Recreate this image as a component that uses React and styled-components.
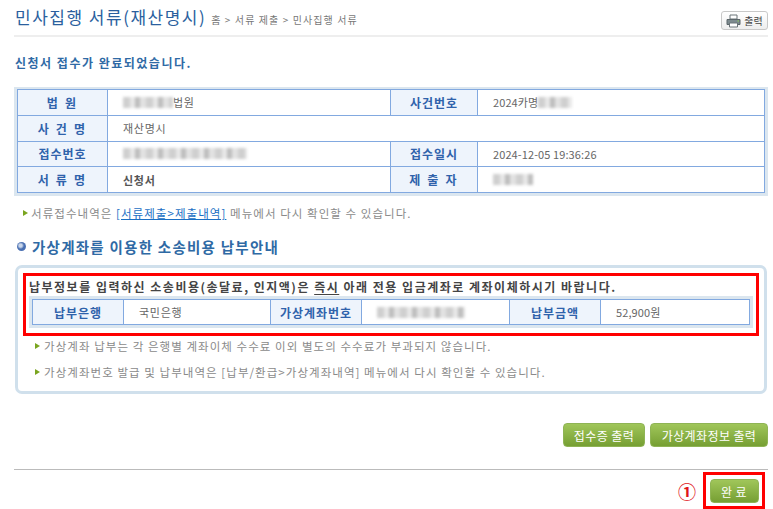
import React from "react"
import styled, { createGlobalStyle } from "styled-components"

const FONT = `"Noto Sans CJK KR", "Noto Sans", sans-serif`;

const caseRows = [
    [["법 원", { blur: 50, trail: "법원" }], ["사건번호", { text: "2024카명", blur: 34, tight: true }]],
    [["사 건 명", { text: "재산명시" }]],
    [["접수번호", { blur: 124 }], ["접수일시", { text: "2024-12-05 19:36:26", tight: true }]],
    [["서 류 명", { text: "신청서", bold: true }], ["제 출 자", { blur: 40 }]],
];

const Cell = ({ text, blur, trail, bold, tight }) =>
    <Value $bold={bold} $tight={tight}>
        {text}
        {blur && <Blur $w={blur}/>}
        {trail}
    </Value>;

const PrinterIcon = () =>
    <svg width="15" height="14" viewBox="0 0 15 14">
        <path d="M4 1h7v4H4z" fill="#fff" stroke="#6b7478"/>
        <path d="M1 5.5h13v5H1z" fill="#7d8a8e" stroke="#5c666a"/>
        <path d="M3.5 9h8v4h-8z" fill="#fff" stroke="#6b7478"/>
        <path d="M11.5 6.5h1.5v1h-1.5z" fill="#8fd05a"/>
    </svg>;

const App = () =>
    <Page>
        <GlobalStyle/>
        <Header>
            <Title>민사집행 서류(재산명시)</Title>
            <Crumbs>홈 &gt; 서류 제출 &gt; 민사집행 서류</Crumbs>
            <PrintButton><PrinterIcon/>출력</PrintButton>
        </Header>
        <Notice>신청서 접수가 완료되었습니다.</Notice>
        <TableFrame>
            <CaseTable>
                {caseRows.map((row) => row.map(([label, value], index) =>
                    <React.Fragment key={label}>
                        <Label $spaced={label.includes(" ")}>{label}</Label>
                        <CellWrap $wide={row.length === 1} $divider={row.length === 2 && index === 0}><Cell {...value}/></CellWrap>
                    </React.Fragment>
                ))}
            </CaseTable>
        </TableFrame>
        <Hint $top={9}>서류접수내역은 <HintLink>[서류제출&gt;제출내역]</HintLink> 메뉴에서 다시 확인할 수 있습니다.</Hint>
        <Section><Bullet/>가상계좌를 이용한 소송비용 납부안내</Section>
        <Panel>
            <Highlight>
                <Lead>납부정보를 입력하신 소송비용(송달료, 인지액)은 <u>즉시</u> 아래 전용 입금계좌로 계좌이체하시기 바랍니다.</Lead>
                <PayFrame>
                    <PayTable>
                        <PayLabel>납부은행</PayLabel>
                        <PayValue>국민은행</PayValue>
                        <PayLabel>가상계좌번호</PayLabel>
                        <PayValue><Blur $w={88}/></PayValue>
                        <PayLabel>납부금액</PayLabel>
                        <PayValue $tight>52,900원</PayValue>
                    </PayTable>
                </PayFrame>
            </Highlight>
            <PanelHint $top={1}>가상계좌 납부는 각 은행별 계좌이체 수수료 이외 별도의 수수료가 부과되지 않습니다.</PanelHint>
            <PanelHint $top={8}>가상계좌번호 발급 및 납부내역은 [납부/환급&gt;가상계좌내역] 메뉴에서 다시 확인할 수 있습니다.</PanelHint>
        </Panel>
        <Actions>
            <GreenButton $w={82}>접수증 출력</GreenButton>
            <GreenButton $w={118}>가상계좌정보 출력</GreenButton>
        </Actions>
        <Footer>
            <Marker>①</Marker>
            <FooterBox><GreenButton $w={49}>완 료</GreenButton></FooterBox>
        </Footer>
    </Page>;

const GlobalStyle = createGlobalStyle`
    html, body {
        margin: 0;
        background: #fff;
        overflow: hidden;
    }
    body {
        font-family: ${FONT};
    }
`;
const Page = styled.div`
    width: 754px;
    height: 509px;
    padding-left: 14px;
    overflow: hidden;
`;
const Header = styled.div`
    height: 35px;
    display: flex;
    align-items: center;
    border-bottom: 2px solid #eeeeee;
    padding-left: 1px;
`;
const Title = styled.h1`
    margin: 0 0 2px;
    font-size: 17px;
    font-weight: 400;
    color: #2b5f9e;
    letter-spacing: 1.5px;
    white-space: nowrap;
`;
const Crumbs = styled.span`
    margin: 3px 0 0 5px;
    font-size: 10px;
    color: #777;
    letter-spacing: 1.1px;
    white-space: nowrap;
`;
const PrintButton = styled.div`
    margin-left: auto;
    margin-top: 6px;
    width: 47px;
    height: 19px;
    box-sizing: border-box;
    display: flex;
    align-items: center;
    justify-content: center;
    gap: 3px;
    font-size: 10px;
    color: #444;
    background: linear-gradient(#ffffff, #eeeeee);
    border: 1px solid #c8c8c8;
    border-radius: 3px;
`;
const Notice = styled.p`
    margin: 16px 0 0 1px;
    height: 20px;
    line-height: 20px;
    font-size: 12px;
    font-weight: 700;
    color: #2f6aa5;
    letter-spacing: 1.5px;
`;
const TableFrame = styled.div`
    margin-top: 14px;
    padding: 2px 3px 3px;
    background: #dbe6ef;
`;
const CaseTable = styled.div`
    display: grid;
    grid-template-columns: 90px 283px 87px 1fr;
    grid-auto-rows: 25.75px;
    background: #fff;
    border: 1px solid #82a9e0;
    border-bottom: 0;
`;
const Label = styled.div`
    display: flex;
    align-items: center;
    justify-content: center;
    font-size: 12px;
    font-weight: 700;
    letter-spacing: ${(props) => props.$spaced ? "2.2px" : "1px"};
    color: #2f62ab;
    background: #eef4fc;
    border-right: 1px solid #82a9e0;
    border-bottom: 1px solid #82a9e0;
    white-space: pre;
`;
const CellWrap = styled.div`
    display: flex;
    align-items: center;
    padding-left: 15px;
    border-bottom: 1px solid #82a9e0;
    ${(props) => props.$wide && "grid-column: 2 / -1;"}
    ${(props) => props.$divider && "border-right: 1px solid #82a9e0;"}
`;
const Value = styled.div`
    display: flex;
    align-items: center;
    font-size: 11px;
    letter-spacing: ${(props) => props.$tight ? "0.1px" : "0.7px"};
    font-weight: ${(props) => props.$bold ? 700 : 400};
    color: ${(props) => props.$bold ? "#555" : "#666"};
    white-space: nowrap;
`;
const Blur = styled.span`
    display: inline-block;
    width: ${(props) => props.$w}px;
    height: 11px;
    background:
        repeating-linear-gradient(90deg, #cfcfcf 0 7px, #e8e8e8 7px 12px, #bdbdbd 12px 17px, #e2e2e2 17px 23px);
    filter: blur(1.6px);
`;
const Hint = styled.p`
    position: relative;
    margin: ${(props) => props.$top}px 0 0 9px;
    padding-left: 8px;
    height: 16px;
    line-height: 16px;
    font-size: 11.5px;
    letter-spacing: 1.05px;
    color: #8a8a8a;
    white-space: nowrap;
    &::before {
        content: "";
        position: absolute;
        left: 0;
        top: 5px;
        border-left: 5px solid #7aa51f;
        border-top: 3.5px solid transparent;
        border-bottom: 3.5px solid transparent;
    }
`;
const HintLink = styled.span`
    color: #1b6fc4;
    text-decoration: underline;
`;
const Section = styled.h2`
    margin: 15px 0 0 3px;
    height: 20px;
    display: flex;
    align-items: center;
    gap: 6px;
    font-size: 14.5px;
    font-weight: 700;
    letter-spacing: 1.25px;
    color: #2f6aa5;
`;
const Bullet = styled.i`
    width: 9px;
    height: 9px;
    border-radius: 50%;
    background: radial-gradient(circle at 40% 40%, #c9d6ea 0 20%, #4a70b2 45% 100%);
`;
const Panel = styled.div`
    margin: 9px 1px 0;
    height: 129px;
    box-sizing: border-box;
    padding: 5px;
    border: 3px solid #d0e0ec;
    border-radius: 7px;
`;
const Highlight = styled.div`
    height: 63px;
    box-sizing: border-box;
    border: 3px solid #ff0000;
    padding: 0 3px;
`;
const Lead = styled.p`
    margin: 0;
    height: 20px;
    line-height: 21px;
    font-size: 12px;
    letter-spacing: 1.5px;
    font-weight: 700;
    color: #444;
    white-space: nowrap;
    u {
        text-underline-offset: 2px;
    }
`;
const PayFrame = styled.div`
    padding: 3px;
    background: #dbe6ef;
`;
const PayTable = styled.div`
    display: grid;
    grid-template-columns: 91px 147px 91px 148px 91px 1fr;
    height: 26px;
    box-sizing: border-box;
    border: 1px solid #82a9e0;
    background: #fff;
`;
const PayLabel = styled.div`
    display: flex;
    align-items: center;
    justify-content: center;
    font-size: 12px;
    letter-spacing: 1px;
    font-weight: 700;
    color: #2f62ab;
    background: #eef4fc;
    border-right: 1px solid #82a9e0;
`;
const PayValue = styled.div`
    display: flex;
    align-items: center;
    padding-left: 15px;
    font-size: 11px;
    letter-spacing: ${(props) => props.$tight ? "0.1px" : "0.7px"};
    color: #666;
    &:not(:last-child) {
        border-right: 1px solid #82a9e0;
    }
`;
const PanelHint = styled(Hint)`
    margin-left: 12px;
    padding-left: 9px;
    margin-top: ${(props) => props.$top}px;
    line-height: 18px;
    height: 18px;
    &::before {
        top: 6px;
    }
`;
const Actions = styled.div`
    margin-top: 29px;
    display: flex;
    justify-content: flex-end;
    gap: 5px;
    padding-bottom: 22px;
    border-bottom: 1px solid #bbbbbb;
`;
const GreenButton = styled.div`
    width: ${(props) => props.$w}px;
    height: 24px;
    box-sizing: border-box;
    display: flex;
    align-items: center;
    justify-content: center;
    font-size: 12px;
    letter-spacing: 0.4px;
    color: #fff;
    background: linear-gradient(#a0c65a, #769f33);
    border: 1px solid #8fb455;
    border-radius: 4px;
    white-space: nowrap;
`;
const Footer = styled.div`
    margin-top: 2px;
    padding-right: 3px;
    display: flex;
    justify-content: flex-end;
    align-items: center;
    gap: 7px;
`;
const Marker = styled.span`
    font-size: 18px;
    font-weight: 700;
    color: #e0141a;
    line-height: 1;
`;
const FooterBox = styled.div`
    width: 62px;
    height: 37px;
    box-sizing: border-box;
    padding-top: 4px;
    display: flex;
    justify-content: center;
    border: 3px solid #ff0000;
`;

export default App
